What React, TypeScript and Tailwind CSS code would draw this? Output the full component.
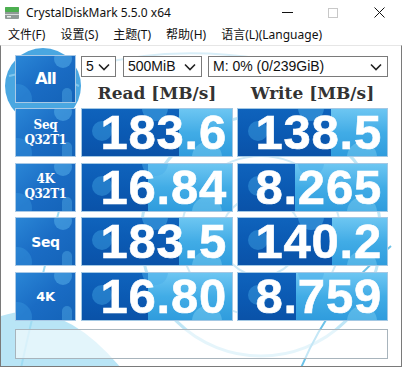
import React from "react";

const rows = [
  { l1: "Seq", l2: "Q32T1", r: "183.6", rp: 64.5, w: "138.5", wp: 62.5 },
  { l1: "4K", l2: "Q32T1", r: "16.84", rp: 44, w: "8.265", wp: 38 },
  { l1: "Seq", l2: "", r: "183.5", rp: 64.5, w: "140.2", wp: 63 },
  { l1: "4K", l2: "", r: "16.80", rp: 44, w: "8.759", wp: 39 },
];

function Chevron() {
  return (
    <svg width="12" height="8" viewBox="0 0 12 8" className="shrink-0">
      <path d="M1 1.5 L6 6.5 L11 1.5" fill="none" stroke="#222" strokeWidth="1.6" />
    </svg>
  );
}

function Select({ w, text }: { w: string; text: string }) {
  return (
    <div
      className={`${w} shrink-0 h-[21px] border border-[#7a7a7a] bg-white flex items-center justify-between pl-[4px] pr-[5px] text-[14px] text-[#111]`}
      style={{ fontFamily: "'Liberation Sans', Arial, sans-serif" }}
    >
      <span>{text}</span>
      <Chevron />
    </div>
  );
}

function Btn({ l1, l2, big, small }: { l1: string; l2?: string; big?: boolean; small?: boolean }) {
  return (
    <div className="relative h-full w-full border border-[#a9c9e6] bg-gradient-to-br from-[#2a86d6] via-[#1a6cc4] to-[#1463b8] overflow-hidden flex flex-col items-center justify-center text-white font-bold">
      <span className="absolute w-[18px] h-[18px] rounded-full bg-[#5ab3ec] opacity-50 left-[38px] top-[-6px]" />
      <span className="absolute w-[10px] h-[22px] rounded-full bg-[#5ab3ec] opacity-40 left-[46px] bottom-[-8px]" />
      <span className="absolute w-[30px] h-[30px] rounded-full bg-[#3d9be0] opacity-40 left-[-14px] bottom-[-12px]" />
      {big ? (
        <span className="relative text-[16px] leading-none" style={{ fontFamily: "'DejaVu Sans', sans-serif", letterSpacing: "-1px" }}>{l1}</span>
      ) : l2 ? (
        <>
          <span className="relative text-[12px] leading-[15px]" style={{ fontFamily: "'DejaVu Serif', serif", letterSpacing: "-0.3px" }}>{l1}</span>
          <span className="relative text-[12px] leading-[15px]" style={{ fontFamily: "'DejaVu Serif', serif", letterSpacing: "-0.5px" }}>{l2}</span>
        </>
      ) : (
        <span
          className={`relative ${small ? "text-[13px]" : "text-[14px]"} leading-none`}
          style={{ fontFamily: "'DejaVu Sans', sans-serif", letterSpacing: "-0.3px" }}
        >
          {l1}
        </span>
      )}
    </div>
  );
}

function Score({ v, p }: { v: string; p: number }) {
  return (
    <div className="relative h-full w-full border border-[#a3c8e4]">
      <div className="absolute inset-0 overflow-hidden bg-gradient-to-b from-[#6cc6f2] via-[#41ace6] to-[#2f9cdd]">
        <div
          className="absolute left-0 top-0 bottom-0 bg-gradient-to-b from-[#0f63bc] via-[#0b5ab3] to-[#0a52a8]"
          style={{ width: `${p}%` }}
        />
        <span className="absolute w-[26px] h-[26px] rounded-full bg-[#49aeea] opacity-50 left-[40%] top-[-14px]" />
        <span className="absolute w-[20px] h-[20px] rounded-full bg-[#49aeea] opacity-40 left-[10px] top-[12px]" />
        <span className="absolute w-[30px] h-[30px] rounded-full bg-[#8ad6f6] opacity-40 right-[10px] bottom-[-16px]" />
      </div>
      <div
        className="relative h-full flex items-center justify-end pr-[5px] text-white font-bold text-[49px] leading-none tracking-[0.8px] [-webkit-text-stroke:0.6px_white]"
        style={{ fontFamily: "'Liberation Sans', Arial, sans-serif" }}
      >
        {v}
      </div>
    </div>
  );
}

export default function App() {
  const cjk = { fontFamily: "'Noto Sans', 'Noto Sans CJK SC', sans-serif" };
  return (
    <div className="w-[402px] h-[367px] bg-white overflow-hidden flex flex-col">
      {/* title bar */}
      <div className="h-[25px] flex items-center bg-white shrink-0">
        <svg width="16" height="16" viewBox="0 0 16 16" className="ml-[4px] mr-[6px]">
          <rect x="1" y="2" width="14" height="12" rx="1" fill="#8f9a96" />
          <rect x="1" y="2" width="14" height="5" rx="1" fill="#4caf50" />
          <rect x="1" y="9" width="14" height="1" fill="#d8dcdb" />
          <rect x="3" y="11" width="4" height="1.5" fill="#e8eceb" />
        </svg>
        <span className="text-[12px] text-[#111]" style={{ fontFamily: "'Noto Sans', sans-serif" }}>
          CrystalDiskMark 5.5.0 x64
        </span>
        <div className="ml-auto flex items-center h-full">
          <div className="w-[46px] h-full flex items-center justify-center">
            <div className="w-[11px] h-[1px] bg-[#111]" />
          </div>
          <div className="w-[46px] h-full flex items-center justify-center">
            <div className="w-[10px] h-[10px] border border-[#c8c8c8]" />
          </div>
          <div className="w-[46px] h-full flex items-center justify-center">
            <svg width="11" height="11" viewBox="0 0 11 11">
              <path d="M0.5 0.5 L10.5 10.5 M10.5 0.5 L0.5 10.5" stroke="#111" strokeWidth="1" />
            </svg>
          </div>
        </div>
      </div>
      {/* menu */}
      <div className="h-[20px] flex items-center pl-[8px] gap-[15px] text-[12px] text-[#111] shrink-0" style={cjk}>
        <span>文件(F)</span>
        <span>设置(S)</span>
        <span>主题(T)</span>
        <span>帮助(H)</span>
        <span>语言(L)(Language)</span>
      </div>
      {/* body */}
      <div className="relative flex-1 border-t border-[#e6e6e6] border-l border-r border-b border-l-[#7a7a7a] border-r-[#7a7a7a] border-b-[#7a7a7a] overflow-hidden">
        <svg className="absolute inset-0" width="402" height="322" viewBox="0 0 402 322">
          <circle cx="42" cy="40" r="38" fill="#2a98dc" opacity="0.85" />
          <path d="M8 30 Q40 20 78 40" fill="none" stroke="#7fc6ee" strokeWidth="2" />
          <circle cx="260" cy="190" r="120" fill="none" stroke="#bfe6f6" strokeWidth="3" />
          <circle cx="260" cy="190" r="80" fill="none" stroke="#cfeaf6" strokeWidth="2" />
          <circle cx="260" cy="190" r="40" fill="none" stroke="#cfeaf6" strokeWidth="2" />
          <path d="M0 270 Q60 250 120 322 L0 322 Z" fill="#8ad3f0" opacity="0.6" />
          <path d="M20 322 Q40 230 70 120" fill="none" stroke="#9fdcf3" strokeWidth="2" />
          <path d="M300 322 Q330 250 390 200" fill="none" stroke="#6cc2e8" strokeWidth="2" />
          <path d="M90 20 Q200 -10 340 30" fill="none" stroke="#d8eef8" strokeWidth="2" />
        </svg>
        <div className="relative pl-[14px] pt-[9px] flex flex-col">
          {/* header row */}
          <div className="flex h-[48px]">
            <div className="w-[61px] h-full shrink-0">
              <Btn l1="All" big />
            </div>
            <div className="ml-[5px] flex flex-col">
              <div className="flex mt-[1px]">
                <Select w="w-[35px]" text="5" />
                <div className="ml-[7px]">
                  <Select w="w-[79px]" text="500MiB" />
                </div>
                <div className="ml-[6px]">
                  <Select w="w-[180px]" text="M: 0% (0/239GiB)" />
                </div>
              </div>
              <div
                className="flex mt-[5px] text-[17px] font-bold text-[#333] leading-[22px]"
                style={{ fontFamily: "'DejaVu Serif', serif" }}
              >
                <div className="w-[152px] shrink-0 text-center">Read [MB/s]</div>
                <div className="w-[151px] shrink-0 ml-[4px] text-center">Write [MB/s]</div>
              </div>
            </div>
          </div>
          <div className="flex flex-col gap-[5.5px] mt-[5px]">
            {rows.map((r, i) => (
              <div key={i} className="flex h-[49px]">
                <div className="w-[61px] h-full shrink-0">
                  <Btn l1={r.l1} l2={r.l2} small={r.l1 === "4K"} />
                </div>
                <div className="w-[152px] h-full ml-[5px] shrink-0">
                  <Score v={r.r} p={r.rp} />
                </div>
                <div className="w-[151px] h-full ml-[4px] shrink-0">
                  <Score v={r.w} p={r.wp} />
                </div>
              </div>
            ))}
          </div>
          <div className="mt-[8px] w-[373px] h-[30px] border border-[#a8b4bc] bg-white/60" />
        </div>
      </div>
    </div>
  );
}
